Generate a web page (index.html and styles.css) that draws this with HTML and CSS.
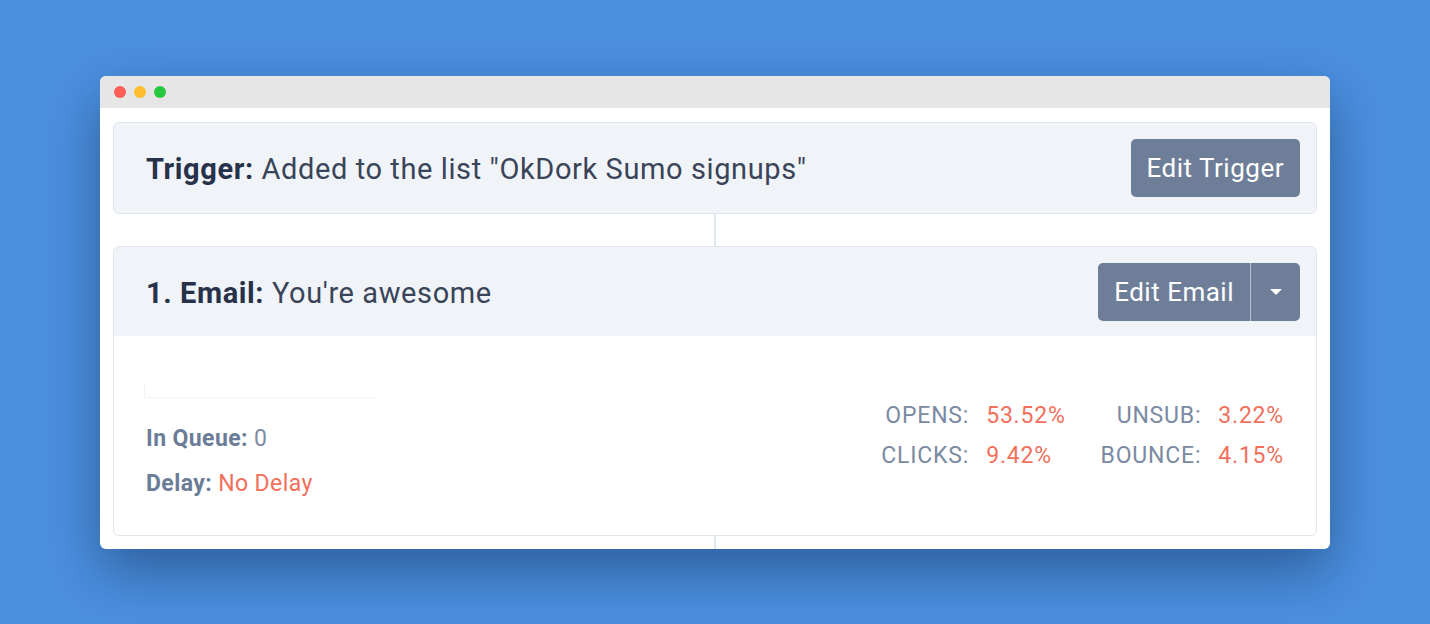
FILE: index.html
```html
<!DOCTYPE html>
<html lang="en">
<head>
  <meta charset="UTF-8">
  <title>Email Sequence</title>
  <link rel="stylesheet" href="styles.css">
</head>
<body>
  <div class="window">
    <div class="titlebar">
      <span class="dot red"></span>
      <span class="dot yellow"></span>
      <span class="dot green"></span>
    </div>

    <div class="content">
      <div class="card trigger">
        <div class="card-title"><strong>Trigger:</strong> Added to the list "OkDork Sumo signups"</div>
        <button class="btn">Edit Trigger</button>
      </div>

      <div class="connector"></div>

      <div class="card email">
        <div class="email-head">
          <div class="card-title"><strong>1. Email:</strong> You're awesome</div>
          <div class="btn-group">
            <button class="btn">Edit Email</button>
            <button class="btn caret"><span class="arrow"></span></button>
          </div>
        </div>
        <div class="email-body">
          <div class="info">
            <div class="cutoff"></div>
            <div class="info-row"><b>In Queue:</b> 0</div>
            <div class="info-row"><b>Delay:</b> <span class="red-text">No Delay</span></div>
          </div>
          <div class="stats">
            <span class="label">OPENS:</span><span class="val">53.52%</span>
            <span class="label wide">UNSUB:</span><span class="val">3.22%</span>
            <span class="label">CLICKS:</span><span class="val">9.42%</span>
            <span class="label wide">BOUNCE:</span><span class="val">4.15%</span>
          </div>
        </div>
      </div>

      <div class="connector tail"></div>
    </div>
  </div>
</body>
</html>
```

FILE: styles.css
```css
* {
  box-sizing: border-box;
}

body {
  margin: 0;
  height: 100vh;
  background: #4b90df;
  font-family: Roboto, 'Noto Sans', sans-serif;
  display: flex;
  justify-content: center;
  align-items: center;
}

.window {
  width: 1230px;
  height: 473px;
  background: #fff;
  border-radius: 6px;
  overflow: hidden;
  box-shadow: 0 22px 55px rgba(10, 30, 70, 0.45);
}

.titlebar {
  height: 32px;
  background: #e6e6e6;
  display: flex;
  align-items: center;
  padding-left: 14px;
  gap: 8px;
}

.dot {
  width: 12px;
  height: 12px;
  border-radius: 50%;
}
.red { background: #fe5f57; }
.yellow { background: #febc2e; }
.green { background: #28c840; }

.content {
  padding: 14px 13px 0;
}

.card {
  border: 1px solid #dfe6ee;
  border-radius: 6px;
  background: #f0f4f8;
}

.trigger {
  display: flex;
  justify-content: space-between;
  align-items: center;
  padding: 16px 16px 16px 32px;
}

.card-title {
  font-size: 29px;
  letter-spacing: 0.6px;
  color: #3a4458;
  padding-top: 3px;
}

.card-title strong {
  color: #27314a;
  font-weight: 700;
}

.btn {
  font-family: inherit;
  font-size: 26px;
  letter-spacing: 0.5px;
  color: #fff;
  background: #6e7e98;
  border: none;
  border-radius: 5px;
  height: 58px;
  padding: 0 16px;
}

.connector {
  width: 2px;
  height: 32px;
  background: #e1e8f0;
  margin: 0 auto;
}

.connector.tail {
  height: 20px;
}

.email {
  overflow: hidden;
}

.email-head {
  display: flex;
  justify-content: space-between;
  align-items: center;
  padding: 16px 16px 15px 32px;
}

.btn-group {
  display: flex;
}

.btn-group .btn:first-child {
  border-radius: 5px 0 0 5px;
}

.btn.caret {
  width: 50px;
  border-radius: 0 5px 5px 0;
  border-left: 1px solid #b6c0ce;
  display: flex;
  align-items: center;
  justify-content: center;
}

.arrow {
  width: 0;
  height: 0;
  border-left: 6px solid transparent;
  border-right: 6px solid transparent;
  border-top: 6px solid #fff;
}

.email-body {
  background: #fff;
  display: flex;
  justify-content: space-between;
  align-items: flex-start;
  padding: 48px 32px 36px;
}

.cutoff {
  width: 234px;
  height: 14px;
  border-left: 1px solid #f4f4f4;
  border-bottom: 1px dotted #ececec;
  margin-left: -2px;
}

.info-row {
  font-size: 23px;
  letter-spacing: 0.4px;
  line-height: 30px;
  color: #7d8ca3;
  margin-top: 15px;
}

.info-row:nth-child(2) {
  margin-top: 26px;
}

.info-row b {
  color: #6b7c97;
}

.red-text {
  color: #f2705b;
}

.stats {
  display: grid;
  grid-template-columns: auto auto auto auto;
  column-gap: 17px;
  font-size: 23px;
  letter-spacing: 0.8px;
  line-height: 40px;
  margin-top: 12px;
}

.label {
  text-align: right;
  color: #7a8aa3;
}

.label.wide {
  padding-left: 18px;
}

.val {
  color: #f2705b;
}
```
